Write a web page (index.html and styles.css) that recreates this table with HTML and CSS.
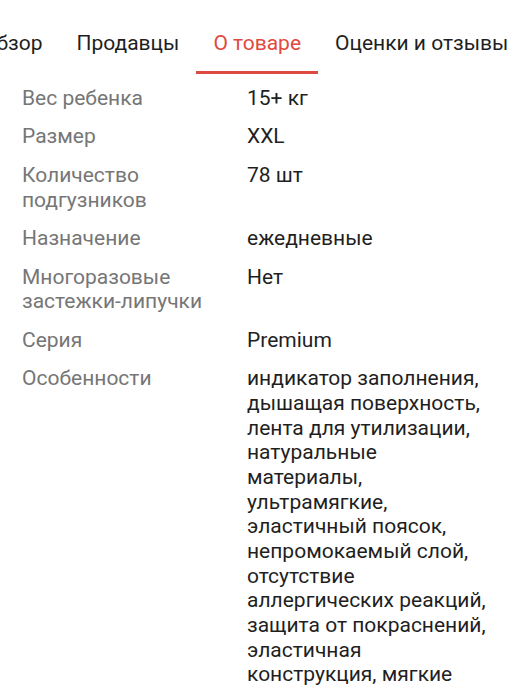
FILE: index.html
```html
<!DOCTYPE html>
<html lang="ru">
<head>
<meta charset="utf-8">
<link rel="stylesheet" href="styles.css">
</head>
<body>
<nav class="tabs">
  <div class="tab">Обзор</div>
  <div class="tab">Продавцы</div>
  <div class="tab active">О товаре</div>
  <div class="tab">Оценки и отзывы</div>
</nav>
<div class="specs">
  <div class="row"><div class="label">Вес ребенка</div><div class="value">15+ кг</div></div>
  <div class="row"><div class="label">Размер</div><div class="value">XXL</div></div>
  <div class="row"><div class="label">Количество подгузников</div><div class="value">78 шт</div></div>
  <div class="row"><div class="label">Назначение</div><div class="value">ежедневные</div></div>
  <div class="row"><div class="label">Многоразовые застежки-липучки</div><div class="value">Нет</div></div>
  <div class="row"><div class="label">Серия</div><div class="value">Premium</div></div>
  <div class="row"><div class="label">Особенности</div><div class="value">индикатор заполнения, дышащая поверхность, лента для утилизации, натуральные материалы, ультрамягкие, эластичный поясок, непромокаемый слой, отсутствие аллергических реакций, защита от покраснений, эластичная конструкция, мягкие</div></div>
</div>
</body>
</html>
```
FILE: styles.css
```css
html, body {
  margin: 0;
  padding: 0;
  background: #fff;
}
body {
  font-family: Roboto, "Noto Sans", sans-serif;
  font-size: 21px;
  color: #212121;
  overflow: hidden;
  width: 514px;
  height: 700px;
}
.tabs {
  display: flex;
  white-space: nowrap;
  margin-left: -35px;
  height: 74px;
  align-items: stretch;
}
.tab {
  padding: 29px 17px 0;
  flex: none;
  line-height: 28px;
  color: #1f1f1f;
  box-sizing: border-box;
}
.tab.active {
  color: #df4a40;
  border-bottom: 3px solid #df4a40;
}
.specs {
  padding: 12px 0 0 22px;
}
.row {
  display: flex;
  line-height: 24.67px;
  margin-bottom: 13.8px;
}
.label {
  width: 225px;
  flex: none;
  color: #767676;
  padding-right: 16px;
  box-sizing: border-box;
}
.value {
  width: 246px;
  color: #1f1f1f;
}
```
